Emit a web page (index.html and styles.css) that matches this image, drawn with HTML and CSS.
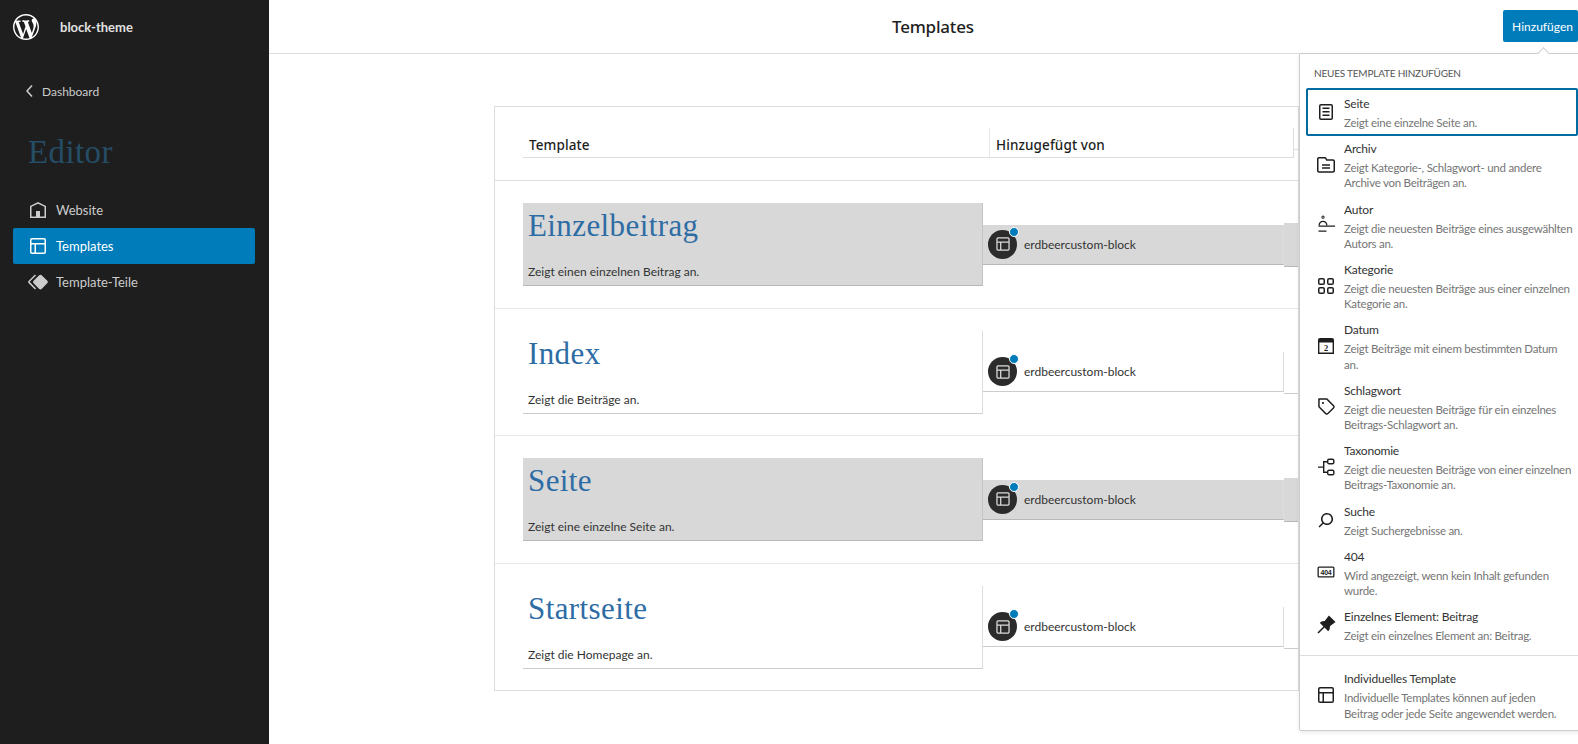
FILE: index.html
```html
<!DOCTYPE html>
<html lang="de">
<head>
<meta charset="UTF-8">
<meta name="viewport" content="width=device-width, initial-scale=1.0">
<title>Templates</title>
<link rel="stylesheet" href="styles.css">
</head>
<body>

<div class="page">
    <aside class="sidebar">
        <div class="site">
            <svg class="wp-logo" viewBox="0 0 20 20"><path d="M20 10c0-5.51-4.49-10-10-10C4.48 0 0 4.49 0 10c0 5.52 4.48 10 10 10 5.51 0 10-4.48 10-10zM7.78 15.37L4.37 6.22c.55-.02 1.17-.08 1.17-.08.5-.06.44-1.13-.06-1.11 0 0-1.45.11-2.37.11-.18 0-.37 0-.58-.01C4.12 2.69 6.87 1.11 10 1.11c2.33 0 4.45.87 6.05 2.34-.68-.11-1.65.39-1.65 1.58 0 .74.45 1.36.9 2.1.35.61.55 1.36.55 2.46 0 1.49-1.4 5-1.4 5l-3.03-8.37c.54-.02.82-.17.82-.17.5-.05.44-1.25-.06-1.22 0 0-1.44.12-2.38.12-.87 0-2.33-.12-2.33-.12-.5-.03-.56 1.2-.06 1.22l.92.08 1.26 3.41zM17.41 10c.24-.64.74-1.87.43-4.25.7 1.29 1.05 2.71 1.05 4.25 0 3.29-1.73 6.24-4.4 7.78.97-2.59 1.94-5.2 2.92-7.78zM6.1 18.09C3.12 16.65 1.11 13.53 1.11 10c0-1.3.23-2.48.72-3.59C3.25 10.3 4.67 14.2 6.1 18.09zm4.03-6.63l2.58 6.98c-.86.29-1.76.45-2.71.45-.79 0-1.57-.11-2.29-.33.81-2.38 1.62-4.74 2.42-7.1z"/></svg>
            <span class="site-name">block-theme</span>
        </div>
        <div class="back">
            <svg class="back-icon" viewBox="0 0 24 24"><path d="M14.6 7l-1.2-1L8 12l5.4 6 1.2-1-4.6-5z"/></svg>
            <span>Dashboard</span>
        </div>
        <h2 class="sidebar-title">Editor</h2>
        <nav class="nav">
            <div class="nav-item">
                <svg class="nav-icon" viewBox="0 0 24 24"><path d="M12 4L4 7.9V20h16V7.9L12 4zm6.5 14.5H14V13h-4v5.5H5.5V8.8L12 5.7l6.5 3.1v9.7z"/></svg>
                <span>Website</span>
            </div>
            <div class="nav-item active">
                <svg class="nav-icon" viewBox="0 0 24 24"><path d="M18 5.5H6a.5.5 0 00-.5.5v3h13V6a.5.5 0 00-.5-.5zm.5 5H10v8h8a.5.5 0 00.5-.5v-7.5zm-10 0h-3V18a.5.5 0 00.5.5h2.5v-8zM6 4h12a2 2 0 012 2v12a2 2 0 01-2 2H6a2 2 0 01-2-2V6a2 2 0 012-2z"/></svg>
                <span>Templates</span>
            </div>
            <div class="nav-item">
                <svg class="nav-icon" viewBox="0 0 24 24"><path d="M21.3 10.8l-5.6-5.6c-.7-.7-1.8-.7-2.5 0l-5.6 5.6c-.7.7-.7 1.8 0 2.5l5.6 5.6c.3.3.8.5 1.2.5s.9-.2 1.2-.5l5.6-5.6c.8-.7.8-1.9.1-2.5zm-17.6 1L10 5.5l-1-1-6.3 6.3c-.7.7-.7 1.8 0 2.5L9 19.5l1.1-1.1-6.3-6.3c-.2 0-.2-.2-.1-.3z"/></svg>
                <span>Template-Teile</span>
            </div>
        </nav>
    </aside>

    <main class="main">
        <header class="topbar">
            <h1 class="page-title">Templates</h1>
            <button class="add-button">Hinzufügen</button>
        </header>

        <section class="table">
            <div class="table-head">
                <div class="head-cell">Template</div>
                <div class="head-cell head-author">Hinzugefügt von</div>
                <div class="head-cell head-rest"></div>
            </div>

            <div class="row shaded">
                <div class="cell-title">
                    <a class="template-name">Einzelbeitrag</a>
                    <p class="template-desc">Zeigt einen einzelnen Beitrag an.</p>
                </div>
                <div class="cell-author">
                    <span class="avatar">
                        <svg class="avatar-icon" viewBox="0 0 24 24"><path d="M18 5.5H6a.5.5 0 00-.5.5v3h13V6a.5.5 0 00-.5-.5zm.5 5H10v8h8a.5.5 0 00.5-.5v-7.5zm-10 0h-3V18a.5.5 0 00.5.5h2.5v-8zM6 4h12a2 2 0 012 2v12a2 2 0 01-2 2H6a2 2 0 01-2-2V6a2 2 0 012-2z"/></svg>
                        <i class="avatar-dot"></i>
                    </span>
                    <span>erdbeercustom-block</span>
                </div>
                <div class="cell-rest"></div>
            </div>

            <div class="row">
                <div class="cell-title">
                    <a class="template-name">Index</a>
                    <p class="template-desc">Zeigt die Beiträge an.</p>
                </div>
                <div class="cell-author">
                    <span class="avatar">
                        <svg class="avatar-icon" viewBox="0 0 24 24"><path d="M18 5.5H6a.5.5 0 00-.5.5v3h13V6a.5.5 0 00-.5-.5zm.5 5H10v8h8a.5.5 0 00.5-.5v-7.5zm-10 0h-3V18a.5.5 0 00.5.5h2.5v-8zM6 4h12a2 2 0 012 2v12a2 2 0 01-2 2H6a2 2 0 01-2-2V6a2 2 0 012-2z"/></svg>
                        <i class="avatar-dot"></i>
                    </span>
                    <span>erdbeercustom-block</span>
                </div>
                <div class="cell-rest"></div>
            </div>

            <div class="row shaded">
                <div class="cell-title">
                    <a class="template-name">Seite</a>
                    <p class="template-desc">Zeigt eine einzelne Seite an.</p>
                </div>
                <div class="cell-author">
                    <span class="avatar">
                        <svg class="avatar-icon" viewBox="0 0 24 24"><path d="M18 5.5H6a.5.5 0 00-.5.5v3h13V6a.5.5 0 00-.5-.5zm.5 5H10v8h8a.5.5 0 00.5-.5v-7.5zm-10 0h-3V18a.5.5 0 00.5.5h2.5v-8zM6 4h12a2 2 0 012 2v12a2 2 0 01-2 2H6a2 2 0 01-2-2V6a2 2 0 012-2z"/></svg>
                        <i class="avatar-dot"></i>
                    </span>
                    <span>erdbeercustom-block</span>
                </div>
                <div class="cell-rest"></div>
            </div>

            <div class="row">
                <div class="cell-title">
                    <a class="template-name">Startseite</a>
                    <p class="template-desc">Zeigt die Homepage an.</p>
                </div>
                <div class="cell-author">
                    <span class="avatar">
                        <svg class="avatar-icon" viewBox="0 0 24 24"><path d="M18 5.5H6a.5.5 0 00-.5.5v3h13V6a.5.5 0 00-.5-.5zm.5 5H10v8h8a.5.5 0 00.5-.5v-7.5zm-10 0h-3V18a.5.5 0 00.5.5h2.5v-8zM6 4h12a2 2 0 012 2v12a2 2 0 01-2 2H6a2 2 0 01-2-2V6a2 2 0 012-2z"/></svg>
                        <i class="avatar-dot"></i>
                    </span>
                    <span>erdbeercustom-block</span>
                </div>
                <div class="cell-rest"></div>
            </div>
        </section>
    </main>

    <div class="popover">
        <i class="popover-arrow"></i>
        <h3 class="popover-title">Neues Template hinzufügen</h3>

        <div class="menu-item selected">
            <svg class="menu-icon" viewBox="0 0 24 24"><path d="M15.5 7.5h-7V9h7V7.5Zm-7 3.5h7v1.5h-7V11Zm7 3.5h-7V16h7v-1.5Z"/><path d="M17 4H7a2 2 0 0 0-2 2v12a2 2 0 0 0 2 2h10a2 2 0 0 0 2-2V6a2 2 0 0 0-2-2Zm-10 1.5h10a.5.5 0 0 1 .5.5v12a.5.5 0 0 1-.5.5H7a.5.5 0 0 1-.5-.5V6a.5.5 0 0 1 .5-.5Z"/></svg>
            <div class="menu-text">
                <div class="menu-label">Seite</div>
                <div class="menu-desc">Zeigt eine einzelne Seite an.</div>
            </div>
        </div>
        <div class="menu-item">
            <svg class="menu-icon" viewBox="0 0 24 24"><path d="M19 6.2h-5.9l-.6-1.1C12.2 4.5 11.5 4 10.8 4H5c-1.1 0-2 .9-2 2v11.8c0 1.1.9 2 2 2h14c1.1 0 2-.9 2-2V8.2c0-1.1-.9-2-2-2zm.5 11.6c0 .3-.2.5-.5.5H5c-.3 0-.5-.2-.5-.5V6c0-.3.2-.5.5-.5h5.8c.2 0 .4.1.4.3l1 2H19c.3 0 .5.2.5.5v9.5zM8 12.8h8v-1.5H8v1.5zm0 3h8v-1.5H8v1.5z"/></svg>
            <div class="menu-text">
                <div class="menu-label">Archiv</div>
                <div class="menu-desc">Zeigt Kategorie-, Schlagwort- und andere<br>Archive von Beiträgen an.</div>
            </div>
        </div>
        <div class="menu-item">
            <svg class="menu-icon icon-evenodd" viewBox="0 0 24 24"><path d="M9 2.600a1.600 1.600 0 1 1 0 3.200 1.600 1.600 0 0 1 0-3.200Zm0 1a.6.6 0 1 0 0 1.200.6.6 0 0 0 0-1.200Z"/><path d="M4.500 12.500c0-3 2-4.800 4.500-4.800s4.500 1.800 4.500 4.800h-1.300c0-2.200-1.300-3.500-3.200-3.500s-3.200 1.300-3.200 3.500H4.500Z"/><path d="M4.500 12.500H21v1.300H4.500v-1.300Zm0 5h8v1.300h-8v-1.300Z"/></svg>
            <div class="menu-text">
                <div class="menu-label">Autor</div>
                <div class="menu-desc">Zeigt die neuesten Beiträge eines ausgewählten Autors an.</div>
            </div>
        </div>
        <div class="menu-item">
            <svg class="menu-icon icon-evenodd" viewBox="0 0 24 24"><path d="M6 5.500h3a.5.5 0 01.5.5v3a.5.5 0 01-.5.5H6a.5.5 0 01-.5-.5V6a.5.5 0 01.5-.5zM4 6a2 2 0 012-2h3a2 2 0 012 2v3a2 2 0 01-2 2H6a2 2 0 01-2-2V6zm11-.5h3a.5.5 0 01.5.5v3a.5.5 0 01-.5.5h-3a.5.5 0 01-.5-.5V6a.5.5 0 01.5-.5zM13 6a2 2 0 012-2h3a2 2 0 012 2v3a2 2 0 01-2 2h-3a2 2 0 01-2-2V6zm5 8.500h-3a.5.5 0 00-.5.5v3a.5.5 0 00.5.5h3a.5.5 0 00.5-.5v-3a.5.5 0 00-.5-.5zM15 13a2 2 0 00-2 2v3a2 2 0 002 2h3a2 2 0 002-2v-3a2 2 0 00-2-2h-3zm-9 1.500h3a.5.5 0 01.5.5v3a.5.5 0 01-.5.5H6a.5.5 0 01-.5-.5v-3a.5.5 0 01.5-.5zM4 15a2 2 0 012-2h3a2 2 0 012 2v3a2 2 0 01-2 2H6a2 2 0 01-2-2v-3z"/></svg>
            <div class="menu-text">
                <div class="menu-label">Kategorie</div>
                <div class="menu-desc">Zeigt die neuesten Beiträge aus einer einzelnen Kategorie an.</div>
            </div>
        </div>
        <div class="menu-item">
            <svg class="menu-icon" viewBox="0 0 24 24"><path d="M6 4h12a2 2 0 0 1 2 2v14H4V6a2 2 0 0 1 2-2Zm-.6 4.500v10.100h13.200V8.500H5.400Z"/><text class="calendar-day" x="12" y="17">2</text></svg>
            <div class="menu-text">
                <div class="menu-label">Datum</div>
                <div class="menu-desc">Zeigt Beiträge mit einem bestimmten Datum<br>an.</div>
            </div>
        </div>
        <div class="menu-item">
            <svg class="menu-icon" viewBox="0 0 24 24"><path d="M20.100 11.200l-6.700-6.700c-.1-.1-.3-.2-.5-.2H5c-.4-.1-.8.3-.8.7v7.800c0 .2.1.4.2.5l6.700 6.700c.2.2.5.4.7.5s.6.2.9.2c.3 0 .6-.1.9-.2.3-.1.5-.3.8-.5l5.600-5.600c.4-.4.7-1 .7-1.600.1-.6-.2-1.200-.6-1.600zM19 13.400L13.400 19c-.1.1-.2.1-.3.2-.2.1-.4.1-.6 0-.1 0-.2-.1-.3-.2l-6.500-6.500V5.800h6.800l6.500 6.500c.2.2.2.4.2.6 0 .1 0 .3-.2.5zM9 8c-.6 0-1 .4-1 1s.4 1 1 1 1-.4 1-1-.4-1-1-1z"/></svg>
            <div class="menu-text">
                <div class="menu-label">Schlagwort</div>
                <div class="menu-desc">Zeigt die neuesten Beiträge für ein einzelnes Beitrags-Schlagwort an.</div>
            </div>
        </div>
        <div class="menu-item">
            <svg class="menu-icon icon-evenodd" viewBox="0 0 24 24"><path d="M15 3.500h3.500a2 2 0 0 1 2 2v2a2 2 0 0 1-2 2H15a2 2 0 0 1-2-2v-2a2 2 0 0 1 2-2Zm0 1.400a.6.6 0 0 0-.6.6v2c0 .3.3.6.6.6h3.500c.3 0 .6-.3.6-.6v-2a.6.6 0 0 0-.6-.6H15ZM15 14.500h3.500a2 2 0 0 1 2 2v2a2 2 0 0 1-2 2H15a2 2 0 0 1-2-2v-2a2 2 0 0 1 2-2Zm0 1.400a.6.6 0 0 0-.6.6v2c0 .3.3.6.6.6h3.500c.3 0 .6-.3.6-.6v-2a.6.6 0 0 0-.6-.6H15Z"/><path d="M9 6h4v1.400h-2.600v9.200H13V18H9v-5.300H4v-1.300h5V6Z"/></svg>
            <div class="menu-text">
                <div class="menu-label">Taxonomie</div>
                <div class="menu-desc">Zeigt die neuesten Beiträge von einer einzelnen Beitrags-Taxonomie an.</div>
            </div>
        </div>
        <div class="menu-item">
            <svg class="menu-icon" viewBox="0 0 24 24"><path d="M13 5c-3.300 0-6 2.700-6 6 0 1.400.5 2.700 1.300 3.700l-3.800 3.800 1.100 1.100 3.800-3.800c1 .8 2.300 1.300 3.700 1.300 3.300 0 6-2.700 6-6S16.300 5 13 5zm0 10.500c-2.500 0-4.500-2-4.500-4.500s2-4.500 4.500-4.500 4.500 2 4.500 4.500-2 4.500-4.500 4.500z"/></svg>
            <div class="menu-text">
                <div class="menu-label">Suche</div>
                <div class="menu-desc">Zeigt Suchergebnisse an.</div>
            </div>
        </div>
        <div class="menu-item">
            <svg class="menu-icon icon-evenodd" viewBox="0 0 24 24"><path d="M5 6.500h14a1.500 1.500 0 0 1 1.500 1.500v8a1.500 1.500 0 0 1-1.500 1.500H5A1.500 1.500 0 0 1 3.500 16V8A1.500 1.500 0 0 1 5 6.500Zm0 1.300a.2.2 0 0 0-.2.2v8c0 .1.1.2.2.2h14a.2.2 0 0 0 .2-.2V8a.2.2 0 0 0-.2-.2H5Z"/><text class="icon-404" x="12" y="14.500">404</text></svg>
            <div class="menu-text">
                <div class="menu-label">404</div>
                <div class="menu-desc">Wird angezeigt, wenn kein Inhalt gefunden wurde.</div>
            </div>
        </div>
        <div class="menu-item">
            <svg class="menu-icon" viewBox="0 0 24 24"><path d="m21.500 9.100-6.600-6.600-4.200 5.600c-1.200-.1-2.400.1-3.600.7-.1 0-.1.1-.2.1-.5.3-.9.6-1.200.9l3.700 3.700-5.700 5.700v1.100h1.100l5.700-5.700 3.700 3.700c.4-.4.7-.8.9-1.200.1-.1.1-.2.2-.3.6-1.100.8-2.400.6-3.600l5.600-4.100z"/></svg>
            <div class="menu-text">
                <div class="menu-label">Einzelnes Element: Beitrag</div>
                <div class="menu-desc">Zeigt ein einzelnes Element an: Beitrag.</div>
            </div>
        </div>

        <div class="menu-group">
            <div class="menu-item">
                <svg class="menu-icon" viewBox="0 0 24 24"><path d="M18 5.500H6a.5.5 0 00-.5.5v3h13V6a.5.5 0 00-.5-.5zm.5 5H10v8h8a.5.5 0 00.5-.5v-7.500zm-10 0h-3V18a.5.5 0 00.5.5h2.500v-8zM6 4h12a2 2 0 012 2v12a2 2 0 01-2 2H6a2 2 0 01-2-2V6a2 2 0 012-2z"/></svg>
                <div class="menu-text">
                    <div class="menu-label">Individuelles Template</div>
                    <div class="menu-desc">Individuelle Templates können auf jeden<br>Beitrag oder jede Seite angewendet werden.</div>
                </div>
            </div>
        </div>
    </div>
</div>

</body>
</html>
```

FILE: styles.css
```css
* {
    box-sizing: border-box;
}

html, body {
    margin: 0;
    height: 100%;
    overflow: hidden;
}

body {
    font-family: Lato, "Noto Sans", Arial, sans-serif;
    font-size: 12px;
    color: #1e1e1e;
    background-color: #fff;
}

.page {
    position: relative;
    display: flex;
    height: 100vh;
}

/* sidebar */
.sidebar {
    flex: 0 0 269px;
    background-color: #1e1e1e;
    color: #ccc;
    font-size: 13px;
}

.site {
    display: flex;
    align-items: center;
    height: 53px;
    padding-left: 13px;
}

.wp-logo {
    width: 26px;
    height: 26px;
    fill: #fff;
}

.site-name {
    margin-left: 21px;
    font-weight: 700;
    color: #e0e0e0;
}

.back {
    display: flex;
    align-items: center;
    height: 24px;
    margin-top: 26px;
    padding-left: 18px;
    font-size: 12px;
}

.back-icon {
    width: 24px;
    height: 24px;
    fill: #ccc;
}

.sidebar-title {
    margin: 26px 0 0 28px;
    font-family: "Liberation Serif", serif;
    font-size: 33px;
    line-height: 46px;
    font-weight: 400;
    letter-spacing: 0.4px;
    color: #254d66;
}

.nav {
    margin: 17px 14px 0 13px;
}

.nav-item {
    display: flex;
    align-items: center;
    gap: 6px;
    height: 36px;
    padding-left: 13px;
    border-radius: 2px;
    color: #ccc;
}

.nav-item.active {
    background-color: #007cba;
    color: #fff;
}

.nav-icon {
    width: 24px;
    height: 24px;
    fill: #ccc;
}

.active .nav-icon {
    fill: #fff;
}

/* main column */
.main {
    flex: 1;
    min-width: 0;
}

.topbar {
    display: flex;
    align-items: center;
    justify-content: space-between;
    height: 54px;
    padding: 0 0 1px 623px;
    border-bottom: 1px solid #ddd;
}

.page-title {
    margin: 0;
    font-family: "Noto Sans", Arial, sans-serif;
    font-size: 17px;
    font-weight: 500;
    letter-spacing: -0.2px;
}

.add-button {
    width: 75px;
    height: 32px;
    padding: 0 0 0 4px;
    border: 0;
    border-radius: 2px;
    background-color: #007cba;
    color: #fff;
    font-family: inherit;
    font-size: 12px;
}

/* table */
.table {
    width: 805px;
    margin: 52px 0 0 225px;
    border: 1px solid #ddd;
}

.table-head {
    display: grid;
    grid-template-columns: 466px 305px 1fr;
    height: 73px;
    padding: 21px 0 22px 28px;
}

.head-cell {
    display: flex;
    align-items: flex-end;
    padding-bottom: 3px;
    padding-left: 6px;
    border-bottom: 1px solid #ddd;
    font-family: "Noto Sans", Arial, sans-serif;
    font-size: 13.500px;
    font-weight: 500;
    letter-spacing: 0.1px;
}

.head-author {
    border-left: 1px solid #e6e6e6;
    border-right: 1px solid #ddd;
}

.head-rest {
    height: 22px;
}

.row {
    display: grid;
    grid-template-columns: 460px 301px 1fr;
    height: 127.500px;
    padding: 22px 0 21.500px 28px;
    border-top: 1px solid #e8e8e8;
    align-items: center;
}

.table-head + .row {
    border-top-color: #ddd;
}

.cell-title {
    display: flex;
    flex-direction: column;
    justify-content: space-between;
    height: 83px;
    padding: 2px 5px 5px;
    border-right: 1px solid #ddd;
    border-bottom: 1px solid #ccc;
}

.template-name {
    font-family: "Liberation Serif", serif;
    font-size: 31px;
    line-height: 42px;
    letter-spacing: 0.4px;
    color: #2e6ca4;
}

.template-desc {
    margin: 0;
    line-height: 16px;
    color: #333;
}

.cell-author {
    display: flex;
    align-items: center;
    gap: 7px;
    height: 40px;
    padding-left: 5px;
    border-right: 1px solid #ddd;
    border-bottom: 1px solid #ccc;
    color: #333;
}

.cell-rest {
    height: 44px;
    border-bottom: 1px solid #ccc;
}

.shaded .cell-title,
.shaded .cell-author,
.shaded .cell-rest {
    background-color: #d8d8d8;
    border-bottom-color: #b8b8b8;
}

.shaded .cell-title {
    border-right-color: #c4c4c4;
}

.avatar {
    position: relative;
    display: flex;
    align-items: center;
    justify-content: center;
    width: 29px;
    height: 29px;
    border-radius: 50%;
    background-color: #2b2b2b;
}

.avatar-icon {
    width: 20px;
    height: 20px;
    fill: #ddd;
}

.avatar-dot {
    position: absolute;
    top: -3px;
    right: -2px;
    width: 10px;
    height: 10px;
    border: 1px solid #fff;
    border-radius: 50%;
    background-color: #007cba;
}

/* add template popover */
.popover {
    position: absolute;
    top: 53px;
    left: 1299px;
    width: 283px;
    padding-bottom: 6px;
    background-color: #fff;
    border: 1px solid #ccc;
    border-radius: 2px;
    box-shadow: 0 2px 4px rgba(0, 0, 0, 0.08);
}

.popover-arrow {
    position: absolute;
    top: -5px;
    left: 239px;
    width: 9px;
    height: 9px;
    background-color: #fff;
    border-top: 1px solid #ccc;
    border-left: 1px solid #ccc;
    transform: rotate(45deg);
}

.popover-title {
    margin: 0;
    padding: 12px 0 0 14px;
    height: 34px;
    font-size: 10px;
    line-height: 14px;
    font-weight: 400;
    text-transform: uppercase;
    letter-spacing: -0.2px;
    color: #555;
}

.menu-item {
    display: flex;
    align-items: center;
    gap: 6px;
    width: 272px;
    margin-left: 6px;
    padding: 6px 0 3.200px 8px;
}

.menu-item.selected {
    padding-bottom: 5.700px;
    margin-bottom: -2.500px;
    border-radius: 2px;
    box-shadow: inset 0 0 0 2px #006ba1;
}

.menu-icon {
    flex: none;
    width: 24px;
    height: 24px;
    fill: #1e1e1e;
}

.icon-evenodd {
    fill-rule: evenodd;
}

.calendar-day {
    font-family: "Liberation Serif", serif;
    font-size: 8.500px;
    font-weight: 700;
    text-anchor: middle;
}

.icon-404 {
    font-family: "Liberation Sans", sans-serif;
    font-size: 7px;
    font-weight: 700;
    letter-spacing: -0.2px;
    text-anchor: middle;
}

.menu-text {
    width: 230px;
}

.menu-label {
    font-size: 12px;
    line-height: 20px;
    margin-bottom: 1px;
    letter-spacing: -0.2px;
    color: #333;
}

.menu-desc {
    font-size: 11.500px;
    line-height: 15.100px;
    letter-spacing: -0.25px;
    color: #757575;
}

.menu-group {
    margin-top: 9px;
    padding-top: 7px;
    border-top: 1px solid #ddd;
}
```
